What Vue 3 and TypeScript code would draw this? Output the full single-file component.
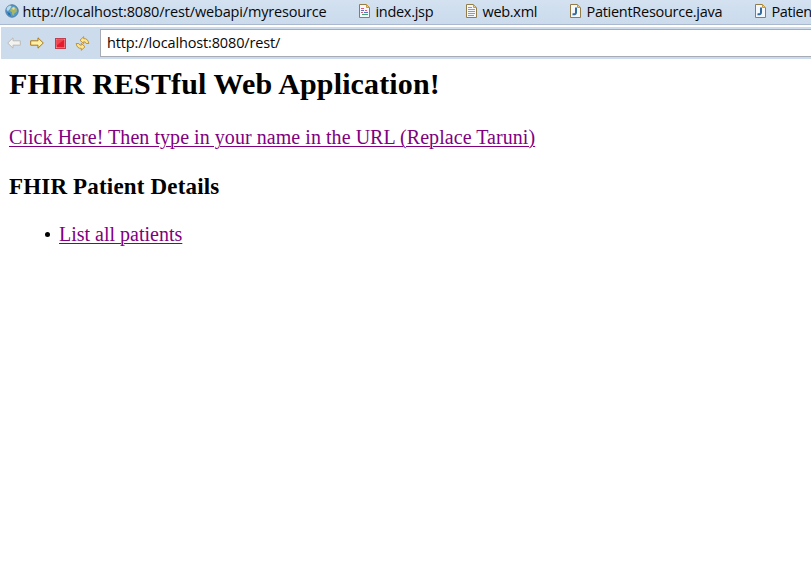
<script setup lang="ts">
interface EditorTab {
  label: string
  kind: 'globe' | 'jsp' | 'xml' | 'java'
  id: string
}

const tabs: EditorTab[] = [
  { id: 'browser', label: 'http://localhost:8080/rest/webapi/myresource', kind: 'globe' },
  { id: 'index', label: 'index.jsp', kind: 'jsp' },
  { id: 'web', label: 'web.xml', kind: 'xml' },
  { id: 'resource', label: 'PatientResource.java', kind: 'java' },
  { id: 'patient', label: 'Patien', kind: 'java' },
]
const address = 'http://localhost:8080/rest/'
</script>

<template>
  <div class="window">
    <nav class="tabs">
      <div v-for="tab in tabs" :key="tab.id" class="tab" :class="tab.id">
        <svg v-if="tab.kind === 'globe'" class="globe" width="14" height="14" viewBox="0 0 14 14">
          <circle cx="7" cy="7" r="6.2" fill="#4f9bd0" stroke="#53779f" />
          <path d="M2 3.5 4.5 1.5 6.5 2 5 5 3 7 1.5 6Z" fill="#b8dce8" />
          <path d="M6 4 9 2.5 12 5 11.5 8 9.5 9 8.5 12 7 10 7 8 5 7Z" fill="#a9b665" />
          <path d="M2 8 5 9 6 12 3.5 11Z" fill="#256fae" />
          <path d="M8 3 10 4 9 6 7 5Z" fill="#e3dfa0" />
        </svg>
        <svg v-else class="file" width="11" height="14" viewBox="0 0 11 14">
          <path d="M.5.5h7l3 3v10H.5Z" fill="#f4f7fb" stroke="#927c48" />
          <path d="M7.5.5v3h3Z" fill="#f1cf7d" stroke="#c49a45" />
          <template v-if="tab.kind === 'jsp'">
            <path d="M2 4.5h3M6 6.5h2" stroke="#e65a70" />
            <path d="M2 6.5h3M5 8.5h4" stroke="#5375c8" />
            <path d="M2 8.5h2" stroke="#e65a70" />
            <path d="M3 10.5h6" stroke="#4aa06c" />
          </template>
          <path v-else-if="tab.kind === 'xml'" d="M2 3.5h4M2 5.5h7M2 7.5h7M2 9.5h7M2 11.5h6" stroke="#8b9cbd" />
          <path v-else d="M6 3.5v5q0 2.2-3.5 1.8" fill="none" stroke="#326b9e" stroke-width="2" />
        </svg>
        <span>{{ tab.label }}</span>
      </div>
    </nav>
    <div class="toolbar">
      <div class="controls">
        <svg width="14" height="12" viewBox="0 0 14 12">
          <path d="M.7 6 6 .8v3h7.3v4.4H6v3Z" fill="#f2f2f1" stroke="#bbb9b6" />
        </svg>
        <svg width="14" height="12" viewBox="0 0 14 12">
          <path d="M13.3 6 8 .8v3H.7v4.4H8v3Z" fill="#fff0a6" stroke="#a87519" />
        </svg>
        <svg width="11" height="11" viewBox="0 0 11 11">
          <rect x=".5" y=".5" width="10" height="10" fill="#f7b6b8" stroke="#c2404c" />
          <rect x="1.5" y="1.5" width="8" height="8" fill="#e51c2b" />
          <path d="M1.5 1.5h8l-8 6Z" fill="#ef4550" />
        </svg>
        <svg width="15" height="15" viewBox="0 0 15 15">
          <path d="M5 4.2 8.7.7v2Q13 2.2 13.8 7.5h-2.6Q10.7 5.6 8.7 5.7v2Z" fill="#ffe68c" stroke="#b98a30" stroke-width=".9" />
          <path d="M10 10.8 6.3 14.3v-2Q2 12.8 1.2 7.5h2.6q.5 1.9 2.5 1.8v-2Z" fill="#ffe68c" stroke="#b98a30" stroke-width=".9" />
        </svg>
      </div>
      <div class="address"><span>{{ address }}</span></div>
    </div>
    <main class="page">
      <h2><span>FHIR RESTful Web Application!</span></h2>
      <p><a href="#">Click Here! Then type in your name in the URL (Replace Taruni)</a></p>
      <h3><span>FHIR Patient Details</span></h3>
      <ul>
        <li><i class="bullet"></i><a href="#">List all patients</a></li>
      </ul>
    </main>
  </div>
</template>

<style>
body { margin: 0; background: #fff; overflow: hidden; }
</style>

<style scoped>
.window { width: 811px; height: 570px; overflow: hidden; background: #fff; }
.tabs {
  box-sizing: border-box; height: 25px; padding-left: 5px; display: flex;
  background: linear-gradient(#d3e1f0, #cbdbec); border-bottom: 1px solid #aab9cf;
  font: 14.5px/24px "Open Sans", "Noto Sans", sans-serif; color: #080808; overflow: hidden;
}
.tab { display: flex; flex: none; gap: 5.5px; white-space: nowrap; }
.tab svg { flex: none; margin-top: 4px; }
.browser { width: 354px; gap: 3.5px; }
.index { width: 107px; }
.web { width: 104px; }
.resource { width: 185px; }
.browser span { letter-spacing: -.17px; }
.index span { letter-spacing: -.3px; }
.web span { letter-spacing: -.3px; }
.resource span { letter-spacing: -.28px; }
.patient span { letter-spacing: -.4px; }
.toolbar {
  box-sizing: border-box; height: 32px; margin: 2px 0 0 1px; padding-top: 2px;
  display: flex; background: #cddcec;
}
.controls { width: 99px; box-sizing: border-box; padding-left: 6px; display: flex; align-items: center; gap: 9px; height: 28px; }
.controls svg:nth-child(3) { margin-left: 2px; }
.address {
  flex: 1; box-sizing: border-box; height: 28px; padding-left: 6px; background: #fff;
  border: 1px solid #a7abb6; border-right: 0;
  font: 14.5px/26px "Open Sans", "Noto Sans", sans-serif; color: #080808; letter-spacing: -.14px;
}
.page { padding: 7px 9px; font: 20px/22px "Liberation Serif", serif; color: #000; }
h2 { margin: 0; font-size: 30px; line-height: 36px; letter-spacing: .13px; }
p { margin: 24px 0 0; letter-spacing: .05px; }
a { color: #800080; text-decoration-thickness: 1px; text-underline-offset: 2px; }
h3 { margin: 26px 0 0; font-size: 23px; line-height: 26px; letter-spacing: .17px; }
ul { list-style: none; margin: 23px 0 0; padding: 0 0 0 36px; }
li { display: flex; align-items: center; }
.bullet { width: 5px; height: 5px; border-radius: 50%; background: #000; margin-right: 9px; }
</style>
